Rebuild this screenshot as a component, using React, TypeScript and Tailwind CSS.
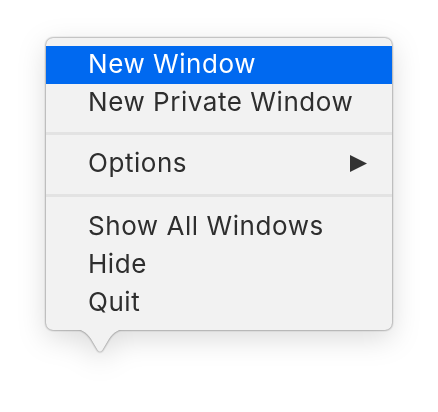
import React from 'react';

type Item = { label: string; active?: boolean; submenu?: boolean } | 'sep';

const items: Item[] = [
  { label: 'New Window', active: true },
  { label: 'New Private Window' },
  'sep',
  { label: 'Options', submenu: true },
  'sep',
  { label: 'Show All Windows' },
  { label: 'Hide' },
  { label: 'Quit' },
];

export default function App() {
  return (
    <div className="w-[438px] h-[412px] bg-white" style={{ fontFamily: 'Inter, "Liberation Sans", sans-serif' }}>
      <div className="pt-[38px] pl-[46px]">
        {/* menu + tail share one drop shadow */}
        <div className="relative w-[346px] [filter:drop-shadow(0_0_0.8px_rgba(0,0,0,0.6))_drop-shadow(0_8px_14px_rgba(0,0,0,0.14))]">
          <div className="bg-[#f2f2f2] rounded-[7px] pt-[8px] pb-[8px] flex flex-col">
            {items.map((item, i) => {
              if (item === 'sep') {
                return (
                  <div key={i} className={i === 2 ? 'pt-[10px] pb-[10px]' : 'pt-[11px] pb-[11px]'}>
                    <div className="h-[3px] bg-[#e3e3e3]" />
                  </div>
                );
              }
              return (
                <div
                  key={i}
                  className={`h-[38px] flex items-center justify-between pl-[42px] pr-[25px] text-[26px] tracking-[0.55px] font-[440] leading-[36px] pb-[2px] ${
                    item.active ? 'bg-[#0069f0] text-white' : 'text-[#2e2e2e]'
                  }`}
                >
                  <span>{item.label}</span>
                  {item.submenu && (
                    <svg width="17" height="17" viewBox="0 0 17 17">
                      <polygon points="0,0 17,8.5 0,17" fill="#333" />
                    </svg>
                  )}
                </div>
              );
            })}
          </div>
          {/* popover tail */}
          <svg
            className="absolute left-[26px] top-full -mt-px"
            width="56"
            height="25"
            viewBox="0 0 56 25"
          >
            <path
              d="M0,0 C10,0 14,3 19,10 L25.5,21 Q28,24.5 30.5,21 L37,10 C42,3 46,0 56,0 Z"
              fill="#f2f2f2"
            />
          </svg>
        </div>
      </div>
    </div>
  );
}
